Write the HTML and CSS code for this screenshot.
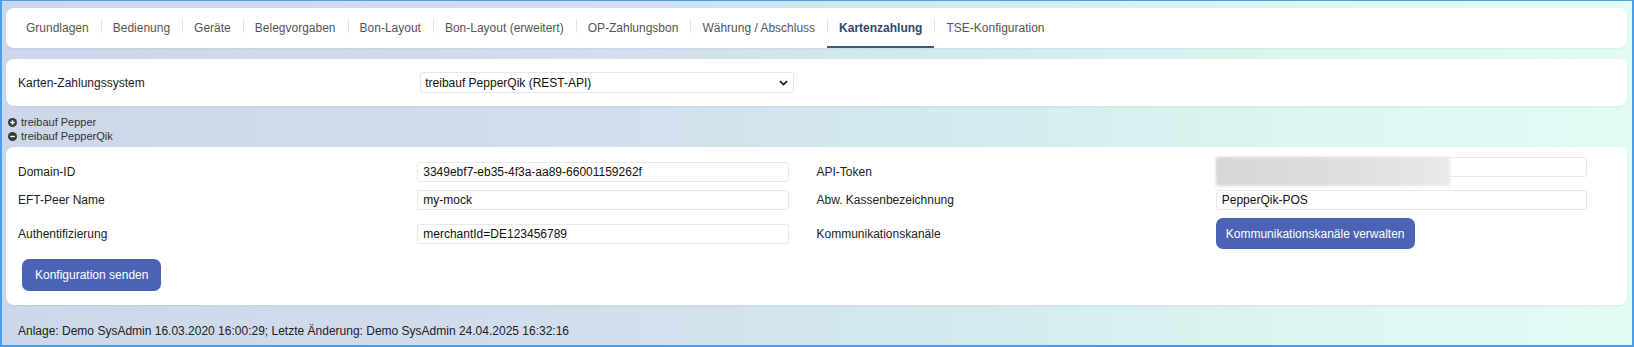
FILE: index.html
```html
<!DOCTYPE html>
<html lang="de">
<head>
  <meta charset="UTF-8" />
  <title>Kartenzahlung</title>
  <link rel="stylesheet" href="styles.css">
</head>
<body>
  <div class="page">

    <nav class="card tabs">
      <a class="tab">Grundlagen</a>
      <a class="tab">Bedienung</a>
      <a class="tab">Geräte</a>
      <a class="tab">Belegvorgaben</a>
      <a class="tab">Bon-Layout</a>
      <a class="tab">Bon-Layout (erweitert)</a>
      <a class="tab">OP-Zahlungsbon</a>
      <a class="tab">Währung / Abschluss</a>
      <a class="tab active">Kartenzahlung</a>
      <a class="tab">TSE-Konfiguration</a>
    </nav>

    <section class="card settings">
      <div class="row">
        <label>Karten-Zahlungssystem</label>
        <div class="select-wrap">
          <select>
            <option>treibauf PepperQik (REST-API)</option>
          </select>
          <svg class="chev" width="9" height="6" viewBox="0 0 10 6"><path d="M1 1l4 3.6L9 1" fill="none" stroke="#222" stroke-width="2"/></svg>
        </div>
      </div>
    </section>

    <div class="toggles">
      <div class="toggle">
        <svg width="9" height="9" viewBox="0 0 16 16"><circle cx="8" cy="8" r="8" fill="#3a3a3a"/><path d="M8 4v8M4 8h8" stroke="#fff" stroke-width="2.4"/></svg>
        treibauf Pepper
      </div>
      <div class="toggle">
        <svg width="9" height="9" viewBox="0 0 16 16"><circle cx="8" cy="8" r="8" fill="#3a3a3a"/><path d="M4 8h8" stroke="#fff" stroke-width="2.4"/></svg>
        treibauf PepperQik
      </div>
    </div>

    <section class="card detail">
      <div class="row">
        <label>Domain-ID</label>
        <div class="field"><input type="text" value="3349ebf7-eb35-4f3a-aa89-66001159262f"></div>
        <label>API-Token</label>
        <div class="field">
          <input type="text" value="">
          <div class="blur"></div>
        </div>
      </div>
      <div class="row">
        <label>EFT-Peer Name</label>
        <div class="field"><input type="text" value="my-mock"></div>
        <label>Abw. Kassenbezeichnung</label>
        <div class="field"><input type="text" value="PepperQik-POS"></div>
      </div>
      <div class="row">
        <label>Authentifizierung</label>
        <div class="field"><input type="text" value="merchantId=DE123456789"></div>
        <label>Kommunikationskanäle</label>
        <div><button class="btn channels">Kommunikationskanäle verwalten</button></div>
      </div>
      <button class="btn send">Konfiguration senden</button>
    </section>

    <div class="meta">Anlage: Demo SysAdmin 16.03.2020 16:00:29; Letzte Änderung: Demo SysAdmin 24.04.2025 16:32:16</div>

  </div>
</body>
</html>
```

FILE: styles.css
```css
html, body {
  margin: 0;
}

body {
  box-sizing: border-box;
  height: 347px;
  overflow: hidden;
  font-family: "Liberation Sans", Arial, sans-serif;
  font-size: 12px;
  color: #222;
  border: 2px solid #4a9fe6;
  border-top-width: 1px;
  background: linear-gradient(90deg, #ccd7e9 0%, #d2deec 35%, #d3ebef 60%, #ddf6f1 80%, #e2fbf5 100%);
}

.page {
  padding: 7px 5px 0 4px;
}

.card {
  background: #fff;
  border-radius: 8px;
  box-shadow: 0 1px 2px rgba(60, 80, 120, 0.08);
}

/* tab bar */
.tabs {
  display: flex;
  height: 40px;
  padding: 0 8px;
}

.tab {
  display: flex;
  align-items: center;
  padding: 0 12px;
  color: #555;
  text-decoration: none;
}

.tab + .tab {
  background: linear-gradient(#e4e4e4, #e4e4e4) left 0 top 11px / 1px 14px no-repeat;
}

.tab.active {
  font-weight: bold;
  color: #34486a;
  box-shadow: inset 0 -2px 0 #3e5a80;
}

/* rows */
.row {
  display: grid;
  grid-template-columns: repeat(4, 1fr);
  align-items: center;
}

.settings {
  margin-top: 11px;
  padding: 13px 12px;
}

.select-wrap {
  display: grid;
  width: 93.5%;
  margin-left: 3px;
}

.select-wrap select,
.select-wrap .chev {
  grid-area: 1 / 1;
}

select {
  appearance: none;
  -webkit-appearance: none;
  height: 21px;
  border: 1px solid #e6e6e6;
  border-radius: 3px;
  padding: 0 4px;
  background: #fff;
  font: 12px "Liberation Sans", Arial, sans-serif;
  color: #111;
}

.chev {
  justify-self: end;
  align-self: center;
  margin-right: 6px;
}

.toggles {
  margin: 9px 0 4px;
  font-size: 11px;
  line-height: 14px;
  color: #333;
}

.toggle {
  display: flex;
  align-items: center;
  gap: 4px;
  padding-left: 2px;
}

.detail {
  padding: 10px 12px 14px;
}

.detail .row {
  min-height: 27px;
}

.field {
  display: grid;
  width: 93%;
}

.field input,
.field .blur {
  grid-area: 1 / 1;
}

input {
  box-sizing: border-box;
  width: 100%;
  height: 20px;
  border: 1px solid #e8e8e8;
  border-radius: 3px;
  padding: 0 5px;
  font: 12px "Liberation Sans", Arial, sans-serif;
  color: #111;
  background: #fff;
}

.blur {
  width: 234px;
  height: 29px;
  align-self: center;
  background: linear-gradient(90deg, #d6d6d6, #dfdfdf 60%, #e9e9e9);
  filter: blur(1.5px);
}

.btn {
  height: 31px;
  border: 0;
  border-radius: 7px;
  background: #4b62b5;
  color: #fff;
  font: 12px "Liberation Sans", Arial, sans-serif;
}

.channels {
  margin: 5px 0;
  padding: 0 10px;
}

.send {
  height: 32px;
  margin: 5px 0 0 4px;
  padding: 0 13px;
}

.meta {
  margin-top: 19px;
  padding-left: 12px;
  line-height: 14px;
}
```
